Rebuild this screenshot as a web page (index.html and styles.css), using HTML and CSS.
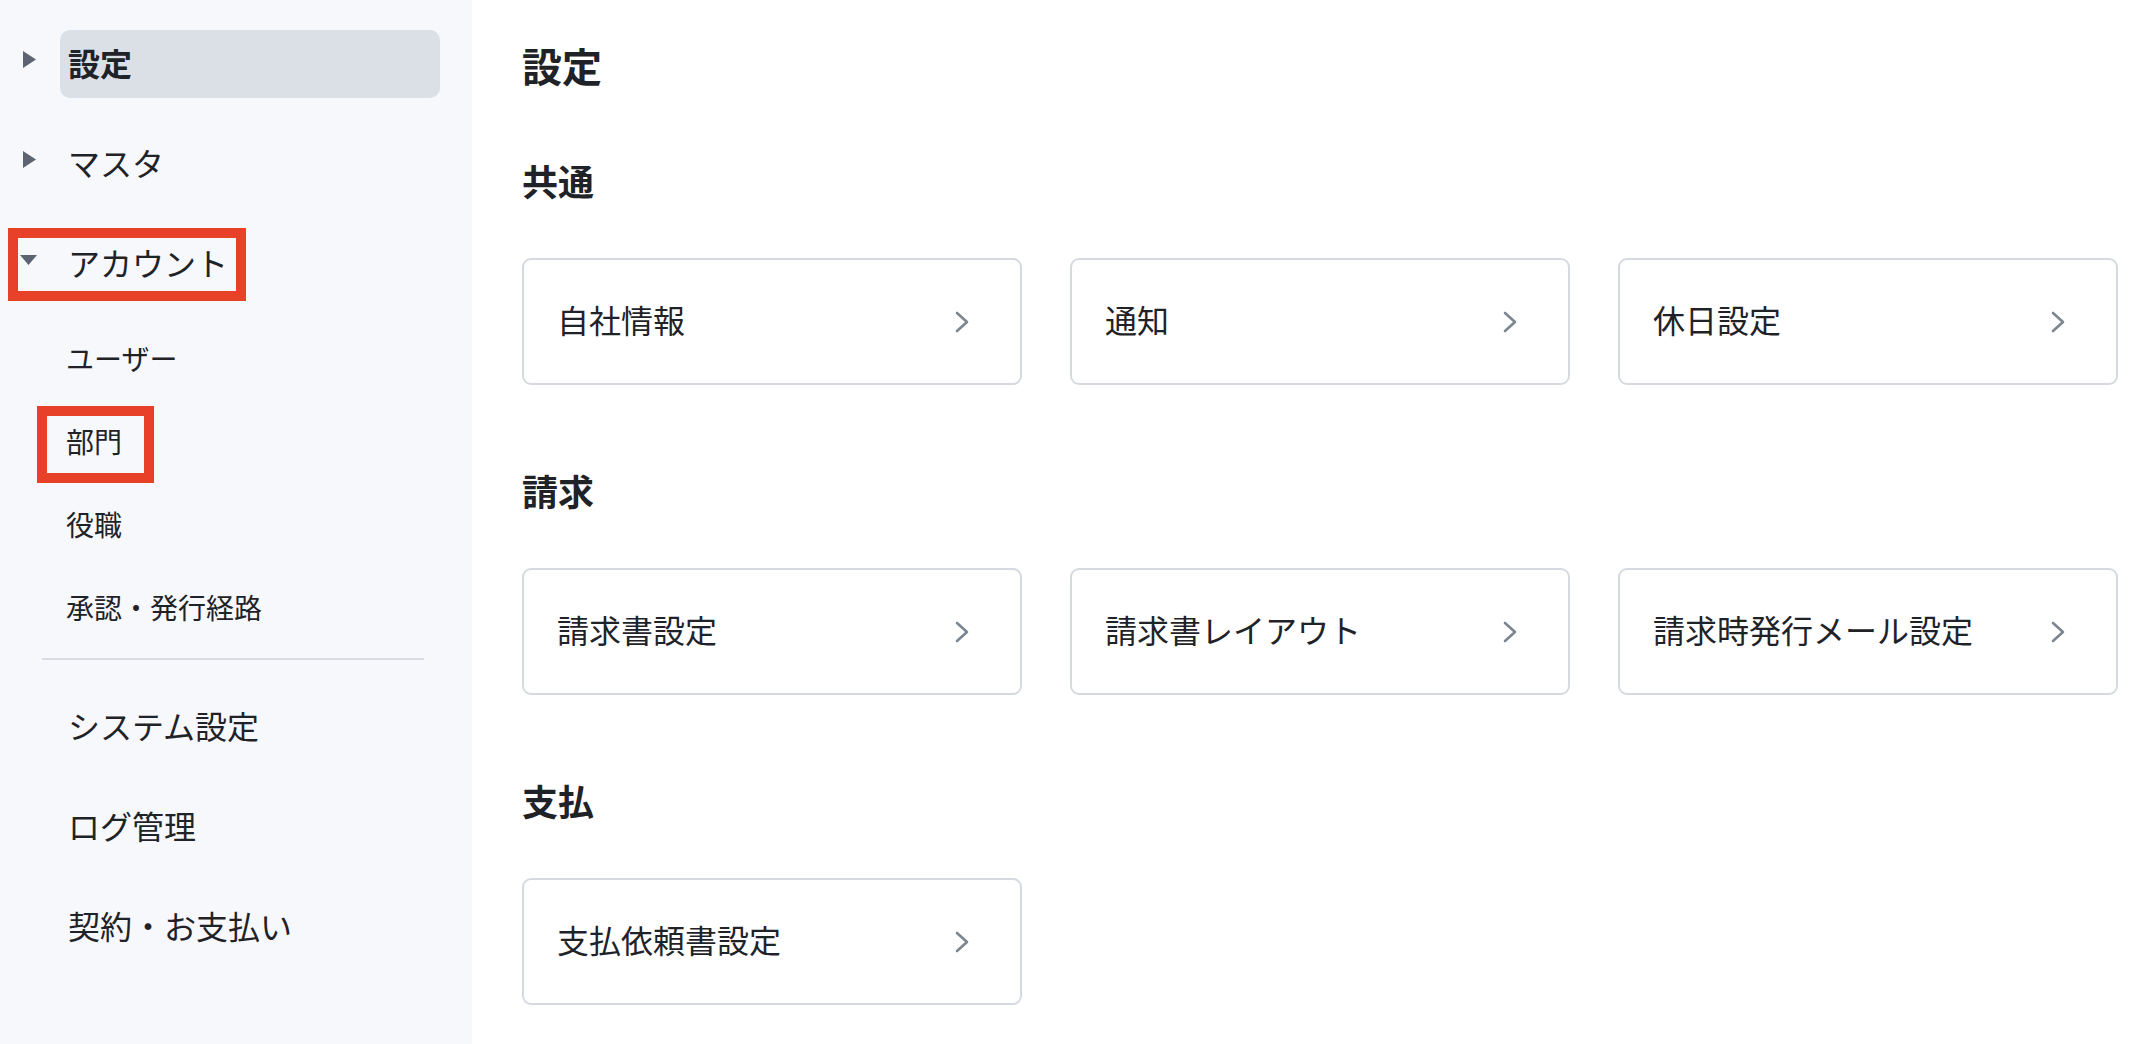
FILE: index.html
```html
<!DOCTYPE html>
<html lang="ja">
<head>
<meta charset="utf-8">
<title>設定</title>
<link rel="stylesheet" href="styles.css">
</head>
<body>
<div class="app">
  <aside class="sidebar">
    <div class="nav-row">
      <span class="caret caret-right"><svg width="13" height="17" viewBox="0 0 13 17"><polygon points="0,0 13,8.5 0,17" /></svg></span>
      <span class="nav-label active">設定</span>
    </div>
    <div class="nav-row">
      <span class="caret caret-right"><svg width="13" height="17" viewBox="0 0 13 17"><polygon points="0,0 13,8.5 0,17" /></svg></span>
      <span class="nav-label">マスタ</span>
    </div>
    <div class="nav-row annot annot-account">
      <span class="caret caret-down"><svg width="17" height="10" viewBox="0 0 17 10"><polygon points="0,0 17,0 8.5,10" /></svg></span>
      <span class="nav-label">アカウント</span>
    </div>
    <ul class="sub-list">
      <li class="sub-item">ユーザー</li>
      <li class="sub-item annot annot-dept">部門</li>
      <li class="sub-item">役職</li>
      <li class="sub-item">承認・発行経路</li>
    </ul>
    <hr class="divider">
    <div class="nav-row"><span class="caret"></span><span class="nav-label">システム設定</span></div>
    <div class="nav-row"><span class="caret"></span><span class="nav-label">ログ管理</span></div>
    <div class="nav-row"><span class="caret"></span><span class="nav-label">契約・お支払い</span></div>
  </aside>

  <main class="content">
    <h1 class="page-title">設定</h1>

    <section class="group">
      <h2 class="group-title">共通</h2>
      <div class="cards">
        <a class="card"><span>自社情報</span><svg class="chev" width="14" height="22" viewBox="0 0 14 22"><polyline points="2,2 12,11 2,20" /></svg></a>
        <a class="card"><span>通知</span><svg class="chev" width="14" height="22" viewBox="0 0 14 22"><polyline points="2,2 12,11 2,20" /></svg></a>
        <a class="card"><span>休日設定</span><svg class="chev" width="14" height="22" viewBox="0 0 14 22"><polyline points="2,2 12,11 2,20" /></svg></a>
      </div>
    </section>

    <section class="group">
      <h2 class="group-title">請求</h2>
      <div class="cards">
        <a class="card"><span>請求書設定</span><svg class="chev" width="14" height="22" viewBox="0 0 14 22"><polyline points="2,2 12,11 2,20" /></svg></a>
        <a class="card"><span>請求書レイアウト</span><svg class="chev" width="14" height="22" viewBox="0 0 14 22"><polyline points="2,2 12,11 2,20" /></svg></a>
        <a class="card"><span>請求時発行メール設定</span><svg class="chev" width="14" height="22" viewBox="0 0 14 22"><polyline points="2,2 12,11 2,20" /></svg></a>
      </div>
    </section>

    <section class="group">
      <h2 class="group-title">支払</h2>
      <div class="cards">
        <a class="card"><span>支払依頼書設定</span><svg class="chev" width="14" height="22" viewBox="0 0 14 22"><polyline points="2,2 12,11 2,20" /></svg></a>
      </div>
    </section>
  </main>
</div>
</body>
</html>
```

FILE: styles.css
```css
*, *::before, *::after { box-sizing: border-box; }

html, body {
  margin: 0;
  padding: 0;
  height: 100%;
  background: #ffffff;
}

body {
  font-family: "Noto Sans CJK JP", "Noto Sans", sans-serif;
  color: #1f2328;
  overflow: hidden;
}

.app {
  display: flex;
  min-height: 100vh;
}

/* ---------- sidebar ---------- */
.sidebar {
  width: 472px;
  flex: 0 0 472px;
  background: #f6f8fb;
  padding-top: 30px;
  min-height: 1044px;
}

.nav-row {
  position: relative;
  display: flex;
  align-items: flex-start;
  height: 68px;
  margin-bottom: 32px;
}

.caret {
  width: 60px;
  flex: 0 0 60px;
  display: flex;
}

.caret svg { fill: #5b6470; display: block; }

.caret-right { padding-left: 23px; padding-top: 21px; }
.caret-down { padding-left: 20px; padding-top: 25px; }

.nav-label {
  width: 380px;
  height: 68px;
  line-height: 64px;
  padding-left: 8px;
  font-size: 32px;
  border-radius: 10px;
  white-space: nowrap;
}

.nav-label.active {
  background: #dbdfe6;
  font-weight: 700;
}

.sub-list {
  list-style: none;
  margin: -12px 0 0 0;
  padding: 0;
}

.sub-item {
  position: relative;
  height: 83px;
  line-height: 80px;
  padding-left: 66px;
  font-size: 28px;
}

.divider {
  border: 0;
  height: 2px;
  background: #d9dde3;
  margin: 8px 48px 33px 42px;
}

/* red annotation boxes */
.annot::after {
  content: "";
  position: absolute;
  border: 10px solid #e8412a;
  pointer-events: none;
}

.annot-account::after {
  left: 8px;
  top: -2px;
  width: 238px;
  height: 73px;
}

.annot-dept::after {
  left: 37px;
  top: 5px;
  width: 117px;
  height: 77px;
}

/* ---------- content ---------- */
.content {
  flex: 1;
  padding: 37px 38px 0 50px;
}

.page-title {
  margin: 0 0 61px 0;
  font-size: 40px;
  line-height: 56px;
  font-weight: 700;
}

.group { margin-bottom: 82px; }
.group:first-of-type .group-title { margin-top: 0; }

.group-title {
  margin: 0 0 52px 0;
  font-size: 36px;
  line-height: 52px;
  font-weight: 700;
}

.group + .group .group-title { margin-top: -3px; }

.cards {
  display: grid;
  grid-template-columns: repeat(3, 500px);
  gap: 48px;
}

.card {
  display: flex;
  align-items: center;
  justify-content: space-between;
  height: 127px;
  padding: 0 51px 6px 33px;
  border: 2px solid #d6dae0;
  border-radius: 9px;
  background: #ffffff;
  font-size: 32px;
  color: #1f2328;
  white-space: nowrap;
}

.chev {
  fill: none;
  stroke: #7b8691;
  stroke-width: 2.6;
  stroke-linecap: round;
  stroke-linejoin: round;
  flex: 0 0 auto;
  margin-top: 6px;
}
```
